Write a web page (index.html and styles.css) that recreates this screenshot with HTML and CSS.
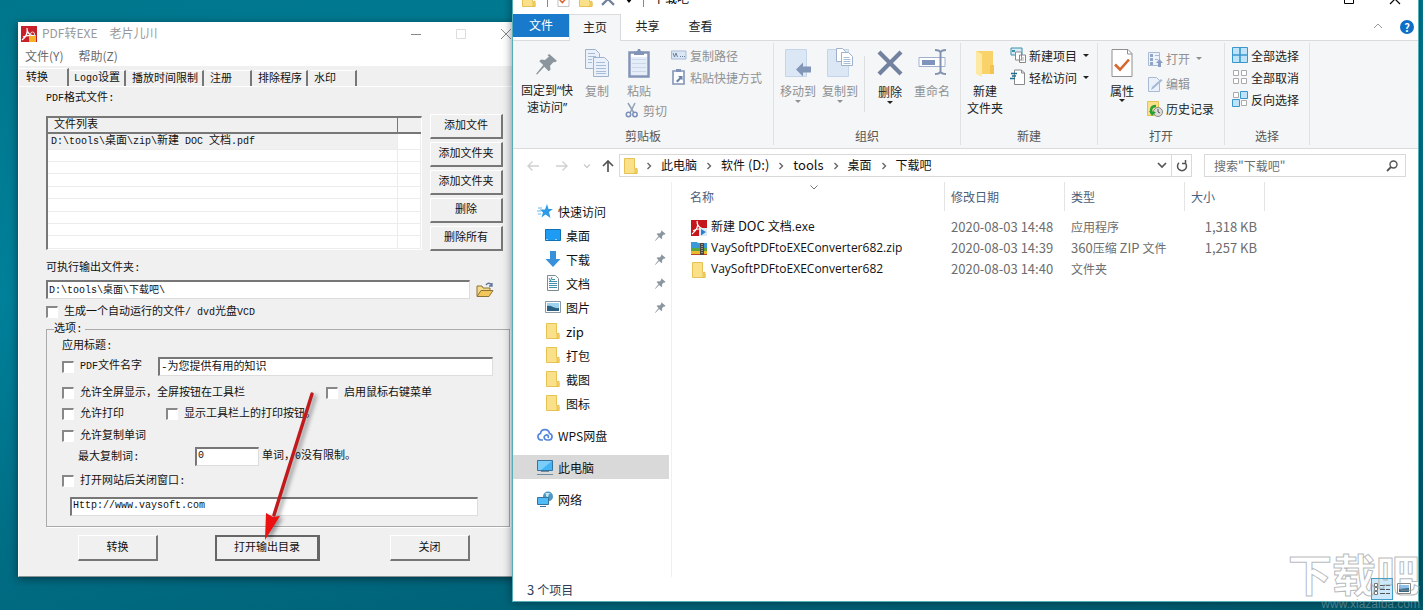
FILE: index.html
```html
<!DOCTYPE html>
<html lang="zh-CN">
<head>
<meta charset="utf-8">
<title>下载吧</title>
<link rel="stylesheet" href="styles.css">
</head>
<body>
<svg class="sprite" aria-hidden="true">
  <symbol id="i-folder" viewBox="0 0 14 16"><path d="M.5.5h10v10l2.500 1v4H.5z" fill="#fbe08a" stroke="#e6c255"/><path d="M11 15.500V11l2-1v5.500z" fill="#f6d467" stroke="#e0b942" stroke-width=".7"/></symbol>
  <symbol id="i-pin" viewBox="0 0 20 20"><path d="M12 1l7 6-1.500 1.500-1.500-.3-3.200 3.300.4 3.700-1.700 1.300-4-4L1 19.500 0 19l6.600-8.200L3 7.500 4.500 6l3.700.3 3.600-3.200L10.500 2z" fill="#8b959e"/></symbol>
  <symbol id="i-sheets" viewBox="0 0 26 30"><g fill="#eaf1fa" stroke="#9fb1cc"><path d="M1.500 1.500h10l4 4v15h-14z"/><path d="M9.500 9.500h11l4 4v15h-15z"/></g><path d="M4 5.500h7M4 8.500h8M4 11.500h4M4 14.500h4M12 14.500h9M12 17.500h10M12 20.500h10M12 23.500h10M12 25.500h10" stroke="#a9bcd6" fill="none"/></symbol>
  <symbol id="i-chev" viewBox="0 0 6 8"><path d="M1.500 1l3 3-3 3" fill="none" stroke="#666" stroke-width="1.400"/></symbol>
  <symbol id="i-check" viewBox="0 0 22 29"><path d="M1 1h16l4 4v23H1z" fill="#fff" stroke="#909090"/><path d="M16.500 1v4.500H21" fill="none" stroke="#909090"/><path d="M4 16l5 5 9-10" fill="none" stroke="#d8662f" stroke-width="2.600"/></symbol>
  <symbol id="i-x" viewBox="0 0 26 26"><path d="M2 2l22 22M24 2L2 24" stroke="#72819d" stroke-width="4.200"/></symbol>
</svg>

<main class="desktop">

<section class="win app" aria-label="PDF转EXE">
  <header class="app-title">
    <svg class="app-logo" viewBox="0 0 16 16"><path fill="#c8202a" d="M0 0h16v16H0z"/><path d="M1 14c4-3 6-7 5-12M6 4c1 4 4 6 9 7M2 11c4-2 8-2 13-1" fill="none" stroke="#fff" stroke-width="1.200"/><path d="M8 10h7v6H8z" fill="#f5b326"/><path d="M9.500 10V8a2 2 0 014 0v2" fill="none" stroke="#ddd"/></svg>
    <h1>PDF转EXE&emsp;老片儿川</h1>
    <div class="app-ctl">
      <button aria-label="最小化"><svg viewBox="0 0 12 12"><path d="M1 6.500h10" stroke="#888"/></svg></button>
      <button aria-label="最大化" disabled><svg viewBox="0 0 12 12"><path d="M1.500 1.500h9v9h-9z" fill="none" stroke="#ddd"/></svg></button>
      <button aria-label="关闭窗口"><svg viewBox="0 0 12 12"><path d="M1 1l10 10M11 1L1 11" stroke="#888"/></svg></button>
    </div>
  </header>
  <nav class="menu"><button>文件(Y)</button><button>帮助(Z)</button></nav>
  <div class="tabs" role="tablist">
    <button role="tab" class="on" aria-selected="true">转换</button>
    <button role="tab"><span class="lat">Logo</span>设置</button>
    <button role="tab">播放时间限制</button>
    <button role="tab">注册</button>
    <button role="tab">排除程序</button>
    <button role="tab">水印</button>
  </div>
  <div class="form">
    <p class="cap"><span class="lat">PDF</span>格式文件:</p>
    <div class="files">
      <table class="list">
        <thead><tr><th>文件列表</th><th></th></tr></thead>
        <tbody>
          <tr class="sel"><td><span class="lat">D:\tools\</span>桌面<span class="lat">\zip\</span>新建<span class="lat"> DOC </span>文档<span class="lat">.pdf</span></td><td></td></tr>
          <tr><td></td><td></td></tr><tr><td></td><td></td></tr><tr><td></td><td></td></tr>
          <tr><td></td><td></td></tr><tr><td></td><td></td></tr><tr><td></td><td></td></tr>
          <tr><td></td><td></td></tr><tr><td></td><td></td></tr>
        </tbody>
      </table>
      <div class="side-btns">
        <button class="btn">添加文件</button><button class="btn">添加文件夹</button><button class="btn">添加文件夹</button><button class="btn">删除</button><button class="btn">删除所有</button>
      </div>
    </div>
    <label class="cap out-cap" for="out">可执行输出文件夹:</label>
    <div class="out">
      <input class="box lat" id="out" type="text" value="D:\tools\桌面\下载吧\">
      <button class="browse" aria-label="浏览"><svg viewBox="0 0 18 16"><path d="M1 14V4h5l1 2h7v3" fill="#f5dc8b" stroke="#8c7338"/><path d="M1 14.500l4-6h12l-4 6z" fill="#f3c65a" stroke="#8c7338"/><path d="M10 3c2-2.500 4-2 5.500 0M16 1v3h-3" fill="none" stroke="#63779c" stroke-width="1.400"/></svg></button>
    </div>
    <label class="ck auto"><input type="checkbox"><span>生成一个自动运行的文件<span class="lat">/ dvd</span>光盘<span class="lat">VCD</span></span></label>
    <fieldset>
      <legend>选项:</legend>
      <p class="cap">应用标题:</p>
      <div class="row name">
        <label class="ck"><input type="checkbox"><span><span class="lat">PDF</span>文件名字</span></label>
        <input class="box" type="text" aria-label="标题" value="-为您提供有用的知识">
      </div>
      <div class="row full">
        <label class="ck"><input type="checkbox"><span>允许全屏显示，全屏按钮在工具栏</span></label>
        <label class="ck"><input type="checkbox"><span>启用鼠标右键菜单</span></label>
      </div>
      <div class="row print">
        <label class="ck"><input type="checkbox"><span>允许打印</span></label>
        <label class="ck"><input type="checkbox"><span>显示工具栏上的打印按钮。</span></label>
      </div>
      <div class="row copy"><label class="ck"><input type="checkbox"><span>允许复制单词</span></label></div>
      <div class="row max">
        <label for="max">最大复制词:</label>
        <input class="box lat" id="max" type="text" value="0">
        <span>单词，<span class="lat">0</span>没有限制。</span>
      </div>
      <div class="row site"><label class="ck"><input type="checkbox"><span>打开网站后关闭窗口:</span></label></div>
      <input class="box lat url" type="text" aria-label="网站" value="Http://www.vaysoft.com">
    </fieldset>
    <div class="actions">
      <button class="btn">转换</button><button class="btn default">打开输出目录</button><button class="btn">关闭</button>
    </div>
  </div>
</section>

<section class="win explorer" aria-label="下载吧">
  <header class="ex-title">
    <svg class="q-folder"><use href="#i-folder"/></svg><i class="q-bar"></i>
    <svg class="q-check"><use href="#i-check"/></svg>
    <svg class="q-folder"><use href="#i-folder"/></svg>
    <svg class="q-x"><use href="#i-x"/></svg>
    <svg class="q-drop" viewBox="0 0 8 5"><path d="M0 0h8L4 5z"/></svg><i class="q-bar"></i>
    <h2>下载吧</h2>
    <div class="ex-ctl">
      <button aria-label="最大化"><svg viewBox="0 0 12 12"><path d="M1.500 1.500h9v9h-9z" fill="none" stroke="#000"/></svg></button>
      <button aria-label="关闭窗口"><svg viewBox="0 0 12 12"><path d="M1 1l10 10M11 1L1 11" stroke="#000" stroke-width="1.200"/></svg></button>
    </div>
  </header>
  <nav class="ex-tabs">
    <button class="file">文件</button><button class="on">主页</button><button>共享</button><button>查看</button>
    <button class="fold" aria-label="折叠功能区"><svg viewBox="0 0 10 6"><path d="M1 5l4-4 4 4" fill="none" stroke="#999"/></svg></button>
    <button class="help" aria-label="帮助">?</button>
  </nav>
  <div class="ribbon">
    <div class="grp g-clip"><div class="grp-body">
      <button class="big quoted"><svg class="ic-pin"><use href="#i-pin"/></svg><span>固定到“快<br>速访问”</span></button>
      <button class="big off"><svg class="ic-copy"><use href="#i-sheets"/></svg><span>复制</span></button>
      <div class="paste">
        <button class="big off"><svg viewBox="0 0 22 30"><path d="M1.500 4.500h19v24h-19z" fill="#fff" stroke="#8293b8" stroke-width="2.500"/><path d="M3 9h16v18H3z" fill="#e4edf8"/><path d="M4 11.500h14M4 15.500h14M4 19.500h14M4 23.500h14" stroke="#cbd8ea"/><path d="M6 7V3.500h3L10 1h2l1 2.500h3V7z" fill="#8293b8"/></svg><span>粘贴</span></button>
        <button class="small off"><svg viewBox="0 0 14 16"><path d="M3 1l6 10M10 1L5 11" stroke="#91a0b8" stroke-width="1.500"/><circle cx="3.500" cy="12.500" r="2.200" fill="none" stroke="#7b90b8" stroke-width="1.500"/><circle cx="10" cy="12.500" r="2.200" fill="none" stroke="#7b90b8" stroke-width="1.500"/></svg>剪切</button>
      </div>
      <div class="col">
        <button class="small off"><svg viewBox="0 0 16 16"><path d="M.5 4h14.500v8H.5z" fill="#dbe7f5" stroke="#a9bbd4"/><path d="M2 6l1.500 4L5 6l1.500 4M9 9.500h1M11 9.500h1M13 9.500h1" fill="none" stroke="#6d7f9e"/></svg>复制路径</button>
        <button class="small off"><svg viewBox="0 0 16 16"><path d="M2 2h11v13H2z" fill="#fff" stroke="#8293b8" stroke-width="1.600"/><path d="M5 0h5v3H5z" fill="#8293b8"/><path d="M5 12l3.500-3.500L7 7h4.500v4.500L10 10l-3.500 3.500z" fill="#6880ac"/></svg>粘贴快捷方式</button>
      </div>
    </div><div class="grp-name">剪贴板</div></div>
    <div class="grp g-org"><div class="grp-body">
      <button class="big off"><svg class="w26" viewBox="0 0 26 30"><path d="M.5 1.500h21v27H.5z" fill="#dce7f5" stroke="#c5d5e9"/><path d="M11 21.500l7-7v4h8v6h-8v4z" fill="#8296b8"/></svg><span>移动到</span><i class="drop"></i></button>
      <button class="big off"><svg class="w26" viewBox="0 0 26 30"><path d="M.5 1.500h21v27H.5z" fill="#dce7f5" stroke="#c5d5e9"/><g fill="#fff" stroke="#9fb1cc"><path d="M9.500.5h6l3 3v10h-9z"/><path d="M14.500 4.500h7l4 4v9h-11z"/></g><path d="M16.500 9.500h6M16.500 11.500h7M16.500 13.500h7M16.500 15.500h7" stroke="#a9bcd6"/></svg><span>复制到</span><i class="drop"></i></button>
      <i class="inner-sep"></i>
      <button class="big"><svg class="ic-x"><use href="#i-x"/></svg><span>删除</span><i class="drop"></i></button>
      <button class="big off"><svg class="ic-ren" viewBox="0 0 28 28"><path d="M1 9.500h26v9H1z" fill="#fff" stroke="#9fb1cc"/><path d="M4 12h13v5H4z" fill="#7f94ba"/><path d="M17 2c3 0 5 1 5.500 2.500C23 3 25 2 28 2M17 26c3 0 5-1 5.500-2.500C23 25 25 26 28 26M22.500 4v20" fill="none" stroke="#8293b0" stroke-width="2"/></svg><span>重命名</span></button>
    </div><div class="grp-name">组织</div></div>
    <div class="grp g-new"><div class="grp-body">
      <button class="big"><svg class="ic-fold" viewBox="0 0 20 28"><path d="M1 1h17v18l1 1v4H1z" fill="#f9d36a"/><path d="M1 1l6 3v23l-6-3z" fill="#fde9a3"/><path d="M15 15h4v9h-4z" fill="#f3c450"/></svg><span>新建<br>文件夹</span></button>
      <div class="col">
        <button class="small"><svg viewBox="0 0 16 16"><path d="M1 1h11v7H1z" fill="#d8ecf6" stroke="#3d8fae"/><path d="M2 3h3v2H2z" fill="#3d8fae"/><path d="M5.500 5h6v8h-6zM9.500 8h6v7.500h-6z" fill="#fff" stroke="#888"/><path d="M11 11h3M11 13h3" stroke="#aaa"/></svg>新建项目<i class="drop"></i></button>
        <button class="small"><svg viewBox="0 0 16 16"><path d="M4.500 1h7l3 3v11.500h-10z" fill="#fff" stroke="#888"/><path d="M11.500 1v3h3" fill="none" stroke="#888"/><path d="M1 4.500h6M2 7h4M0 9.500h5" stroke="#1c6f96" stroke-width="1.300"/></svg>轻松访问<i class="drop"></i></button>
      </div>
    </div><div class="grp-name">新建</div></div>
    <div class="grp g-open"><div class="grp-body">
      <button class="big"><svg class="ic-prop"><use href="#i-check"/></svg><span>属性</span><i class="drop"></i></button>
      <div class="col wide">
        <button class="small off"><svg viewBox="0 0 16 16"><path d="M1.500 1.500h11v13h-11z" fill="#edf3fa" stroke="#a9bbd4"/><path d="M3 3h3v3H3zM3 7h3v3H3zM3 11h3v3H3z" fill="#90a6c8"/><path d="M8 4.500h4M8 8.500h3" stroke="#a9bbd4"/><path d="M11 16v-4H9l3.500-4 3.500 4h-2v4z" fill="#8ba0c2"/></svg>打开<i class="drop"></i></button>
        <button class="small off"><svg viewBox="0 0 16 16"><path d="M1.500 1.500h8l3 3v11h-11z" fill="#eaf1fa" stroke="#a9bbd4"/><path d="M4 14l1-3 9-8 1.500 1.500-9 8z" fill="#a5b9d8"/></svg>编辑</button>
        <button class="small"><svg viewBox="0 0 16 16"><path d="M.5.5h11v14H.5z" fill="#fbe08a" stroke="#e6c255"/><circle cx="11" cy="11" r="4.500" fill="#ddd" stroke="#888"/><path d="M11 8v3l2 1" fill="none" stroke="#555"/><path d="M9 5c-5 0-6 4-4 8" fill="none" stroke="#27a035" stroke-width="2.500"/><path d="M2 10l7 1-4 4z" fill="#27a035"/></svg>历史记录</button>
      </div>
    </div><div class="grp-name">打开</div></div>
    <div class="grp g-sel"><div class="grp-body">
      <div class="col">
        <button class="small"><svg viewBox="0 0 16 16"><path d="M.5.5h15v15H.5z" fill="#bfe4fa" stroke="#3b97cb"/><path d="M8 0v16M0 8h16" stroke="#3b97cb" stroke-width="1.600"/></svg>全部选择</button>
        <button class="small"><svg viewBox="0 0 16 16"><path d="M1.500 1.500h5v5h-5zM9.500 1.500h5v5h-5zM1.500 9.500h5v5h-5zM9.500 9.500h5v5h-5z" fill="#fff" stroke="#aaa"/></svg>全部取消</button>
        <button class="small"><svg viewBox="0 0 16 16"><path d="M1.500 1.500h5v5h-5zM9.500 9.500h5v5h-5z" fill="#fff" stroke="#aaa"/><path d="M8.500.5h7v7h-7zM.5 8.500h7v7h-7z" fill="#bfe4fa" stroke="#3b97cb"/></svg>反向选择</button>
      </div>
    </div><div class="grp-name">选择</div></div>
  </div>

  <div class="addr">
    <div class="nav">
      <button aria-label="后退"><svg viewBox="0 0 14 12"><path d="M13 6H2M6.500 1.500L2 6l4.500 4.500" fill="none" stroke="#d0d0d0" stroke-width="1.400"/></svg></button>
      <button aria-label="前进"><svg viewBox="0 0 14 12"><path d="M1 6h11M7.500 1.500L12 6l-4.500 4.500" fill="none" stroke="#d0d0d0" stroke-width="1.400"/></svg></button>
      <button class="rec" aria-label="最近"><svg viewBox="0 0 14 12"><path d="M4 4.500l3 3 3-3" fill="none" stroke="#ccc" stroke-width="1.300"/></svg></button>
      <button aria-label="上移"><svg viewBox="0 0 14 12"><path d="M7 12V1.500M2 6l5-5 5 5" fill="none" stroke="#555" stroke-width="1.700"/></svg></button>
    </div>
    <div class="crumbs">
      <svg class="f"><use href="#i-folder"/></svg>
      <svg class="c"><use href="#i-chev"/></svg><a href="#">此电脑</a>
      <svg class="c"><use href="#i-chev"/></svg><a href="#">软件<span class="en"> (D:)</span></a>
      <svg class="c"><use href="#i-chev"/></svg><a href="#" class="en">tools</a>
      <svg class="c"><use href="#i-chev"/></svg><a href="#">桌面</a>
      <svg class="c"><use href="#i-chev"/></svg><a href="#">下载吧</a>
      <button class="dd" aria-label="历史位置"><svg viewBox="0 0 10 7"><path d="M1 1l4 4 4-4" fill="none" stroke="#555" stroke-width="1.700"/></svg></button>
      <button class="rf" aria-label="刷新"><svg viewBox="0 0 12 12"><path d="M3 2.800A4.500 4.500 0 109 2.800M9.500 0v3.500H6" fill="none" stroke="#555" stroke-width="1.500"/></svg></button>
    </div>
    <label class="search"><input type="search" aria-label="搜索" placeholder="搜索&quot;下载吧&quot;"><svg viewBox="0 0 12 12"><circle cx="7.500" cy="4.500" r="3.500" fill="none" stroke="#555" stroke-width="1.400"/><path d="M5 7L1 11" stroke="#555" stroke-width="1.800"/></svg></label>
  </div>

  <div class="body">
    <nav class="tree">
      <a href="#"><svg viewBox="0 0 16 16"><path d="M10 1l1.500 5H16l-4 3 1.500 6-5-3.500-4 3 1.500-5L3 6.500h5z" fill="#2e9be6"/><path d="M1 5h4M0 8h4M1 11h3" stroke="#6ab8ee"/></svg>快速访问</a>
      <div class="sub">
        <a href="#"><svg viewBox="0 0 16 16"><path d="M.5 2.500h15v11H.5z" fill="#1e9bf2" stroke="#1272b5"/><path d="M1 12.500h14" stroke="#9bd3fa" stroke-dasharray="2 7"/></svg>桌面<svg class="pin"><use href="#i-pin"/></svg></a>
        <a href="#"><svg viewBox="0 0 16 16"><path d="M5 0h6v8h4.500L8 16 .5 8H5z" fill="#388fda"/></svg>下载<svg class="pin"><use href="#i-pin"/></svg></a>
        <a href="#"><svg viewBox="0 0 16 16"><path d="M2.500.5h8l3 3v12h-11z" fill="#fff" stroke="#7d8b92"/><path d="M4 6.500h8M4 8.500h8M4 10.500h8M4 12.500h8M7 4.500h3" stroke="#3f8faf"/><path d="M4 3l1.500 3L7 2" fill="none" stroke="#3f8faf"/></svg>文档<svg class="pin"><use href="#i-pin"/></svg></a>
        <a href="#"><svg viewBox="0 0 16 16"><path d="M.5 2.500h15v11H.5z" fill="#fff" stroke="#8a99a5"/><path d="M2 4h12v8H2z" fill="#9ed2ef"/><path d="M2 7c5-1 7 3 12 2v3H2z" fill="#2b6080"/></svg>图片<svg class="pin"><use href="#i-pin"/></svg></a>
        <a href="#" class="en"><svg><use href="#i-folder"/></svg>zip</a>
        <a href="#"><svg><use href="#i-folder"/></svg>打包</a>
        <a href="#"><svg><use href="#i-folder"/></svg>截图</a>
        <a href="#"><svg><use href="#i-folder"/></svg>图标</a>
      </div>
      <a href="#" class="top"><svg viewBox="0 0 16 16"><path d="M6 13H4a3.300 3.300 0 01-.5-6.500C4 1.500 11.500 1 12.500 6.500A3.300 3.300 0 0112 13h-2c-3 0-4-4-1-5 2-.3 3 1.500 2 3" fill="none" stroke="#5485dd" stroke-width="1.700"/></svg>WPS网盘</a>
      <a href="#" class="top cur"><svg viewBox="0 0 16 16"><path d="M.5 1.500h15v10H.5z" fill="#42b4f5" stroke="#35739e"/><path d="M1 2h14L4 11H1z" fill="#7bcdfa"/><path d="M4 12.500h8M0 15.500h16" stroke="#6f8ca0"/></svg>此电脑</a>
      <a href="#" class="top"><svg viewBox="0 0 16 16"><circle cx="11" cy="5.500" r="5" fill="#4d98c4"/><path d="M8 2c2 2 0 3 2 4s1-4 4-4" fill="#c2e4ef"/><path d="M.5 6.500h11v7H.5z" fill="#4fbcf8" stroke="#35739e"/><path d="M3 15.500h6" stroke="#35739e"/></svg>网络</a>
    </nav>
    <div class="pane">
      <svg class="sort" viewBox="0 0 8 5"><path d="M.5.5L4 4 7.500.5" fill="none" stroke="#777"/></svg>
      <table class="grid">
        <thead><tr><th class="c-name">名称</th><th class="c-date">修改日期</th><th class="c-type">类型</th><th class="c-size">大小</th><th></th></tr></thead>
        <tbody>
          <tr><td><svg viewBox="0 0 16 16"><path fill="#c4161c" d="M0 0h16v16H0z"/><path d="M1 14c4-3 7-7 5-13M6 3c1 4 4 6 9 7M2 11c4-3 8-2 13-1" fill="none" stroke="#fff" stroke-width="1.200"/><path d="M8 8h8v8H8z" fill="#dceaf8"/><path d="M10 9l5 3-5 3.500z" fill="#2a7fd0"/></svg>新建<span class="en"> DOC </span>文档<span class="fname">.exe</span></td><td>2020-08-03 14:48</td><td>应用程序</td><td>1,318 KB</td><td></td></tr>
          <tr><td><svg viewBox="0 0 16 16"><path fill="#3a9ad8" d="M0 1h6l1 1h9v5H0z"/><path fill="#58a83e" d="M0 7h16v4H0z"/><path fill="#edb92c" d="M0 10h16v3H0z"/><path fill="#b64524" d="M0 13h16v1H0z"/><path fill="#4d4741" d="M9 2h4v12H9z"/><path d="M11 3v10" stroke="#ddd" stroke-dasharray="1 1"/></svg><span class="fname">VaySoftPDFtoEXEConverter682.zip</span></td><td>2020-08-03 14:39</td><td><span class="en">360</span>压缩<span class="en"> ZIP </span>文件</td><td>1,257 KB</td><td></td></tr>
          <tr><td><svg><use href="#i-folder"/></svg><span class="fname">VaySoftPDFtoEXEConverter682</span></td><td>2020-08-03 14:40</td><td>文件夹</td><td></td><td></td></tr>
        </tbody>
      </table>
    </div>
  </div>
  <footer class="status">
    <span><span class="en">3 </span>个项目</span>
    <div class="views">
      <button class="on" aria-label="详细信息"><svg viewBox="0 0 18 16"><path d="M1.500 2.500h3v3h-3zM1.500 6.500h3v3h-3zM1.500 10.500h3v3h-3z" fill="#fff" stroke="#777"/><path d="M7 4.500h5M7 8.500h5M7 12.500h5M13 4.500h4M13 8.500h4M13 12.500h4" stroke="#555"/></svg></button>
      <button aria-label="大图标"><svg viewBox="0 0 14 12"><path d="M.5.5h13v10H.5z" fill="#fff" stroke="#888"/><path d="M2 2h10v7H2z" fill="#8cc3ec"/><path d="M2 6l10-1v4H2z" fill="#3b6680"/></svg></button>
    </div>
  </footer>
</section>

<svg class="arrow" viewBox="0 0 60 156" aria-hidden="true"><path d="M52 5L14 126" stroke="#c11a1c" stroke-width="3.400" stroke-linecap="round"/><path d="M5 151l1-27 7 4 7-1z" fill="#ec1010"/></svg>
<div class="mark"><b>下载吧</b><span>www.xiazaiba.com</span></div>
</main>
</body>
</html>
```

FILE: styles.css
```css
* { box-sizing: border-box; }
body { margin: 0; }
.sprite { position: absolute; width: 0; height: 0; }
button, input { font: inherit; color: inherit; margin: 0; }
button { padding: 0; border: 0; background: none; }
a { color: inherit; text-decoration: none; }
svg { display: block; flex: none; }
h1, h2, p { margin: 0; font-size: inherit; font-weight: normal; }

.desktop {
  position: relative;
  min-height: 100vh;
  overflow: hidden;
  background: linear-gradient(170deg, #00768c 0%, #00809a 35%, #006d84 65%, #00586b 100%);
}
.win { position: absolute; font-family: "Noto Sans CJK SC", sans-serif; font-size: 12px; }

/* converter window */
.app {
  left: 18px; top: 22px; width: 511px;
  background: #f0f0f0;
  border: 1px solid #fff;
  border-top: 0;
  border-bottom: 1px solid #8a9498;
  box-shadow: 0 2px 8px rgba(0, 20, 30, .6);
}
.app-title { display: flex; align-items: center; height: 24px; background: #fff; color: #999; padding-left: 2px; }
.app-logo { width: 16px; height: 16px; }
.app-title h1 { margin-left: 5px; white-space: nowrap; font-size: 12px; line-height: 22px; height: 24px; }
.app-ctl { display: flex; margin-left: auto; }
.app-ctl button { width: 45px; height: 24px; display: grid; place-items: center; }
.app-ctl svg { width: 12px; height: 12px; }
.menu { display: flex; gap: 15px; height: 20px; background: #fff; color: #6a6a6a; padding-left: 6px; }
.menu button { line-height: 20px; }
.tabs, .form { font-family: "Liberation Mono", "Noto Sans CJK SC", monospace; font-size: 11px; color: #111; }
.lat { font-size: 10px; white-space: pre; }
.tabs { display: flex; align-items: flex-end; height: 21px; padding-top: 2px; border-bottom: 1px solid #fff; }
.tabs button {
  height: 16px; padding: 0 4px; margin: 0 2px 0 0; line-height: 14px; text-align: left; white-space: nowrap;
  border-top: 1px solid #fff; border-right: 2px solid #777;
}
.tabs .on { height: 18px; width: 50px; padding-left: 7px; line-height: 14px; margin-right: 1px; }
.tabs button:nth-child(2) { width: 56px; }
.tabs button:nth-child(3) { width: 76px; }
.tabs button:nth-child(4) { width: 46px; }
.tabs button:nth-child(5) { width: 54px; }
.tabs button:nth-child(6) { width: 47px; }

.form { padding: 5px 18px 15px 27px; line-height: 12px; }
.cap { display: block; line-height: 12px; }
.files { display: flex; gap: 8px; margin-top: 9px; }
.list {
  width: 376px; height: 134px; margin-top: 2px; table-layout: fixed; border-collapse: separate; border-spacing: 0;
  background: #fff; border: 1px solid #fff; border-top: 2px solid #777; border-left: 2px solid #777;
}
.list th { height: 16px; padding: 1px 6px 0; font-weight: normal; text-align: left; line-height: 13px; background: #f0f0f0; border-bottom: 2px solid #777; }
.list th:first-child { border-right: 1px solid #777; }
.list th:last-child { width: 23px; }
.list td { height: 12px; padding: 0 3px; line-height: 12px; border-bottom: 1px solid #ececec; border-right: 1px solid #ececec; white-space: nowrap; }
.list .sel td { padding-top: 1px; }
.list .sel td:first-child { background: #f0f0f0; }
.side-btns { display: flex; flex-direction: column; gap: 3px; }
.btn {
  height: 25px; background: #f0f0f0; border: 1px solid #fff; border-right: 2px solid #777; border-bottom: 2px solid #777;
  white-space: nowrap;
}
.side-btns .btn { width: 73px; }
.out-cap { margin-top: 11px; }
.out { display: flex; gap: 6px; margin-top: 6px; }
.box {
  height: 19px; padding: 0 2px 4px 1px; background: #fff; color: #111; border-radius: 0;
  border: 1px solid #ddd; border-top: 2px solid #777; border-left: 2px solid #777;
}
.out .box { width: 424px; }
.browse svg { width: 18px; height: 16px; }
.ck { display: flex; align-items: center; gap: 6px; height: 12px; white-space: nowrap; }
.ck input {
  appearance: none; flex: none; width: 12px; height: 12px; background: #fff;
  border: 1px solid #fff; border-top: 2px solid #888; border-left: 2px solid #888;
}
.ck input:checked { background: #333; }
.auto { margin-top: 7px; }
fieldset { margin: 5px 0 0; padding: 5px 16px 10px 15px; border: 1px solid #aaa; box-shadow: 1px 1px #fff; }
legend { margin-left: -8px; padding: 0 2px 0 0; line-height: 12px; }
.row { display: grid; align-items: center; white-space: nowrap; }
.name { grid-template-columns: 96px 1fr; margin-top: 5px; }
.full { grid-template-columns: 264px 1fr; margin-top: 11px; }
.print { grid-template-columns: 104px 1fr; margin-top: 9px; }
.copy { margin-top: 10px; }
.max { grid-template-columns: 117px 64px 1fr; column-gap: 0; padding-left: 16px; margin-top: 5px; }
.max .box { width: 64px; }
.max > span { padding-left: 3px; }
.site { margin-top: 9px; }
.url { display: block; width: 408px; margin: 10px 0 0 8px; }
.actions { display: flex; padding-left: 32px; margin-top: 8px; }
.actions .btn { width: 80px; height: 26px; }
.actions .default { width: 105px; margin: 0 70px 0 57px; border: 2px solid #666; border-right-width: 3px; }

/* file explorer window */
.explorer {
  left: 512px; top: -17px; right: 4px; bottom: 8px;
  display: flex; flex-direction: column;
  background: #fff; border: 1px solid #55aeb5; color: #222;
  box-shadow: 0 0 9px rgba(0, 20, 30, .5);
}
.en { font-size: 13px; white-space: pre; }
.fname { font-family: "Open Sans", sans-serif; }
.ex-title { display: flex; align-items: center; height: 30px; padding-left: 9px; flex: none; color: #000; }
.q-folder { width: 14px; height: 16px; }
.q-bar { width: 1px; height: 16px; background: #888; margin: 0 9px 0 11px; }
.q-check { width: 13px; height: 16px; margin-right: 9px; }
.q-x { width: 14px; height: 14px; margin: 0 11px 0 8px; }
.q-drop { width: 6px; height: 4px; margin-top: 3px; }
.ex-title h2 { font-size: 12px; line-height: 20px; height: 22px; }
.ex-ctl { display: flex; margin-left: auto; }
.ex-ctl button { width: 46px; height: 30px; display: grid; place-items: center; }
.ex-ctl svg { width: 12px; height: 12px; }
.ex-tabs { display: flex; align-items: stretch; height: 27px; flex: none; border-bottom: 1px solid #dadbdc; }
.ex-tabs button { width: 53px; line-height: 22px; padding-bottom: 3px; }
.ex-tabs .file { width: 56px; height: 23px; background: #1979ca; color: #fff; padding-bottom: 1px; }
.ex-tabs .on { width: 52px; background: #f5f6f7; border: 1px solid #dadbdc; border-bottom: 0; height: 27px; }
.ex-tabs .fold { width: 10px; margin-left: auto; }
.fold svg { width: 10px; height: 6px; }
.ex-tabs .help { width: 14px; height: 14px; margin: 6px 4px 0 17px; padding: 0; border-radius: 50%; background: #0f6fc6; color: #fff; font-weight: bold; font-size: 11px; line-height: 14px; }

.ribbon { display: flex; height: 108px; flex: none; background: #f5f6f7; border-bottom: 1px solid #dadbdc; padding: 2px 0 3px; }
.grp { display: flex; flex-direction: column; flex: none; border-right: 1px solid #e0e1e2; white-space: nowrap; }
.grp-body { display: flex; flex: 1; align-items: flex-start; padding-top: 5px; }
.grp-name { height: 18px; line-height: 18px; text-align: center; color: #555; }
.big { display: flex; flex-direction: column; align-items: center; line-height: 17px; }
.big > svg { width: 22px; height: 30px; margin-bottom: 4px; }
.off { color: #8f9192; }
.small { display: flex; align-items: center; gap: 3px; height: 22px; }
.small > svg { width: 16px; height: 16px; }
.drop { width: 0; height: 0; border: 3px solid transparent; border-top-color: currentColor; border-bottom: 0; }
.small .drop { margin-left: 3px; }
.quoted { font-family: "Open Sans", "Noto Sans CJK SC", sans-serif; }
.g-clip { width: 261px; }
.g-clip .big:first-child { width: 68px; }
.g-clip .grp-body > .big:nth-child(2) { width: 32px; }
.big .ic-pin { width: 22px; height: 22px; margin: 5px 0 7px; }
.big .ic-copy { width: 26px; height: 30px; }
.paste { display: flex; flex-direction: column; width: 58px; padding-left: 11px; }
.paste .big:first-child { width: 30px; }
.big .w26 { width: 26px; }
.big .ic-x { width: 26px; height: 26px; margin: 2px 0 7px; }
.big .ic-ren { width: 28px; height: 28px; margin: 0 0 6px; }
.big .ic-fold { width: 20px; height: 28px; margin: 2px 0 4px; }
.g-org { width: 187px; }
.g-org .big { width: 42px; }
.g-org .grp-body { padding-left: 3px; }
.g-org .drop { margin-top: 1px; }
.inner-sep { width: 1px; height: 56px; margin: 8px 4px 0 3px; background: #dedfe0; }
.g-new { width: 137px; }
.g-new .big { width: 48px; }
.g-new .col { padding-left: 1px; }
.g-new .col, .g-sel .col, .g-clip .col { margin-top: -4px; }
.g-open { width: 127px; }
.g-open .big { width: 48px; }
.g-open .wide .small { height: 25px; }
.g-open .wide { margin-top: -2px; padding-left: 1px; }
.g-sel { width: 85px; }
.g-sel .col { padding-left: 7px; }

.addr { display: flex; align-items: center; height: 33px; flex: none; padding: 0 12px 0 13px; }
.nav { display: flex; width: 93px; gap: 15px; }
.nav svg { width: 14px; height: 12px; }
.nav .rec { margin: 0 -8px 0 -4px; }
.crumbs { display: flex; align-items: center; flex: 1; height: 23px; border: 1px solid #d9d9d9; padding-left: 4px; color: #111; white-space: nowrap; }
.crumbs a { line-height: 18px; padding-bottom: 1px; }
.crumbs .f { width: 14px; height: 16px; margin-right: -1px; }
.crumbs .c { width: 24px; height: 8px; }
.dd { margin-left: auto; width: 18px; }
.dd svg { width: 10px; height: 7px; margin: auto; }
.rf { width: 20px; height: 21px; border-left: 1px solid #d9d9d9; }
.rf svg { width: 12px; height: 12px; margin: auto; }
.search { display: flex; align-items: center; width: 202px; height: 23px; margin-left: 12px; border: 1px solid #d9d9d9; padding: 0 7px 0 9px; }
.search input { flex: 1; min-width: 0; border: 0; outline: 0; padding: 0; background: none; }
.search input::placeholder { color: #6d6d6d; opacity: 1; }
.search svg { width: 12px; height: 12px; }

.body { display: flex; flex: 1; min-height: 0; }
.tree { width: 159px; flex: none; padding-top: 17px; border-right: 1px solid #f0f0f0; color: #111; }
.tree a { display: flex; align-items: center; gap: 5px; height: 24px; padding-left: 24px; margin-right: 2px; }
.tree svg { width: 16px; height: 16px; }
.tree .sub a { padding-left: 32px; }
.tree .top { margin-top: 8px; }
.tree .cur { background: #d9d9d9; }
.tree .pin { width: 11px; height: 11px; margin: 0 3px 0 auto; }
.pane { position: relative; flex: 1; }
.sort { position: absolute; left: 138px; top: 3px; width: 8px; height: 5px; }
.grid { width: 100%; table-layout: fixed; border-collapse: separate; border-spacing: 0; }
.grid th { height: 29px; padding: 0 6px; text-align: left; font-weight: normal; color: #4c607a; border-right: 1px solid #e4e4e4; }
.grid th:last-child { border: 0; }
.grid .c-name { width: 273px; padding-left: 18px; }
.grid .c-date, .grid .c-type { width: 120px; }
.grid .c-size { width: 80px; }
.grid tbody::before { content: ""; display: block; height: 5px; }
.grid td { height: 21px; padding: 0 6px; line-height: 20px; color: #6d6d6d; white-space: nowrap; }
.grid td:first-child { padding-left: 19px; color: #111; }
.grid td:first-child svg { display: inline-block; width: 16px; height: 16px; margin-right: 4px; vertical-align: middle; }
.grid td:nth-child(2) { font-size: 13px; }
.grid td:nth-child(4) { text-align: right; padding-right: 8px; font-size: 13px; }
.status { display: flex; align-items: center; justify-content: space-between; height: 24px; flex: none; padding: 0 7px 0 14px; color: #2b3c58; }
.views { display: flex; align-items: center; gap: 4px; }
.views button { display: grid; place-items: center; height: 22px; }
.views .on { width: 22px; background: #cce8fa; border: 1px solid #3b9ecb; }
.views .on svg { width: 18px; height: 16px; }
.views button:last-child svg { width: 14px; height: 12px; }

/* overlays */
.arrow { position: absolute; left: 260px; top: 389px; width: 60px; height: 156px; filter: drop-shadow(3px 2px 2px rgba(0, 0, 0, .4)); fill: none; }
.mark { position: absolute; right: 3px; bottom: 0; width: 134px; pointer-events: none; font-family: "Noto Sans CJK SC", sans-serif; text-align: right; }
.mark b { display: block; height: 50px; font-size: 44px; line-height: 50px; color: transparent; -webkit-text-stroke: 1px rgba(150, 155, 160, .7); }
.mark span { display: block; font-family: "Liberation Sans", sans-serif; font-size: 12px; line-height: 12px; color: rgba(130, 160, 170, .6); }
```
